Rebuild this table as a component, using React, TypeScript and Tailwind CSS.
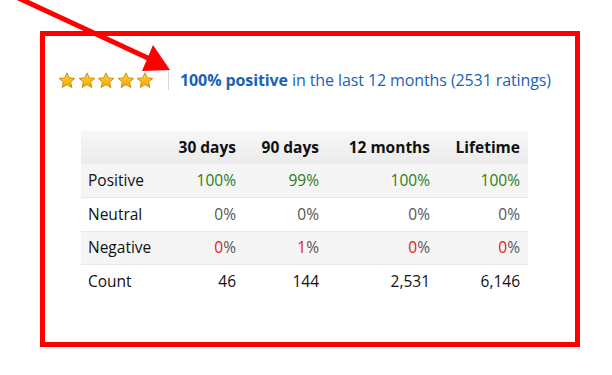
import React from "react";

const rows = [
  { label: "Positive", tone: "pos", values: ["100", "99", "100", "100"] },
  { label: "Neutral", tone: "neu", values: ["0", "0", "0", "0"] },
  { label: "Negative", tone: "neg", values: ["0", "1", "0", "0"] },
  { label: "Count", tone: "count", values: ["46", "144", "2,531", "6,146"] },
];

const heads = ["30 days", "90 days", "12 months", "Lifetime"];

function Star() {
  return (
    <svg width="18" height="17" viewBox="0 0 24 23">
      <defs>
        <linearGradient id="starFill" x1="0" y1="0" x2="0" y2="1">
          <stop offset="0" stopColor="#ffd63a" />
          <stop offset="1" stopColor="#f5a500" />
        </linearGradient>
      </defs>
      <polygon
        points="12,1.2 15.1,8 22.6,8.6 16.9,13.5 18.6,21 12,17.1 5.4,21 7.1,13.5 1.4,8.6 8.9,8"
        fill="url(#starFill)"
        stroke="#c98a10"
        strokeWidth="1.3"
        strokeLinejoin="round"
      />
    </svg>
  );
}

function Cell({ tone, value }: { tone: string; value: string }) {
  if (tone === "count") return <span className="text-[#111]">{value}</span>;
  const color = tone === "pos" ? "text-[#2b7d1a]" : tone === "neg" ? "text-[#e3161b]" : "text-[#555]";
  return (
    <span className="text-[#555]">
      <span className={color}>{value}</span>
      <span className={tone === "pos" ? "text-[#2b7d1a]" : "text-[#555]"}>%</span>
    </span>
  );
}

export default function App() {
  return (
    <div className="relative w-[612px] h-[375px] bg-white overflow-hidden font-['Open_Sans',sans-serif]">
      {/* annotation box */}
      <div className="ml-[40px] mt-[31px] w-[540px] h-[316px] border-[5px] border-[#ff0000]">
        <div className="flex items-center mt-[34px] ml-[13px] h-[20px]">
          <div className="flex gap-[1.5px]">
            {[0, 1, 2, 3, 4].map((i) => (
              <Star key={i} />
            ))}
          </div>
          <div className="w-px h-[20px] bg-[#d5d5d5] ml-[14px] mr-[11px]" />
          <div className="text-[16px] text-[#1a62b8] whitespace-nowrap tracking-[-0.1px]">
            <span className="font-bold">100% positive</span> in the last 12 months (2531 ratings)
          </div>
        </div>

        <table className="ml-[36px] mt-[41px] border-collapse text-[15.5px] text-[#111]">
          <colgroup>
            <col className="w-[89px]" />
            <col className="w-[74px]" />
            <col className="w-[83px]" />
            <col className="w-[111px]" />
            <col className="w-[90px]" />
          </colgroup>
          <thead>
            <tr className="h-[33px] bg-gradient-to-b from-[#f7f7f7] to-[#ebebeb]">
              <th />
              {heads.map((h) => (
                <th key={h} className="text-right pr-[8px] font-bold">
                  {h}
                </th>
              ))}
            </tr>
          </thead>
          <tbody>
            {rows.map((r, i) => (
              <tr
                key={r.label}
                className={`h-[33.5px] border-b border-[#e7e7e7] last:border-b-0 ${i % 2 === 0 ? "bg-[#f5f5f5]" : "bg-white"}`}
              >
                <td className="pl-[7px] text-left">{r.label}</td>
                {r.values.map((v, j) => (
                  <td key={j} className="text-right pr-[8px]">
                    <Cell tone={r.tone} value={v} />
                  </td>
                ))}
              </tr>
            ))}
          </tbody>
        </table>
      </div>

      {/* arrow overlay */}
      <svg className="absolute left-0 top-0 pointer-events-none" width="612" height="375">
        <line x1="14" y1="-4" x2="150" y2="59" stroke="#ff0000" strokeWidth="5" />
        <polygon points="153,45 142,71 170,70" fill="#ff0000" />
      </svg>
    </div>
  );
}
